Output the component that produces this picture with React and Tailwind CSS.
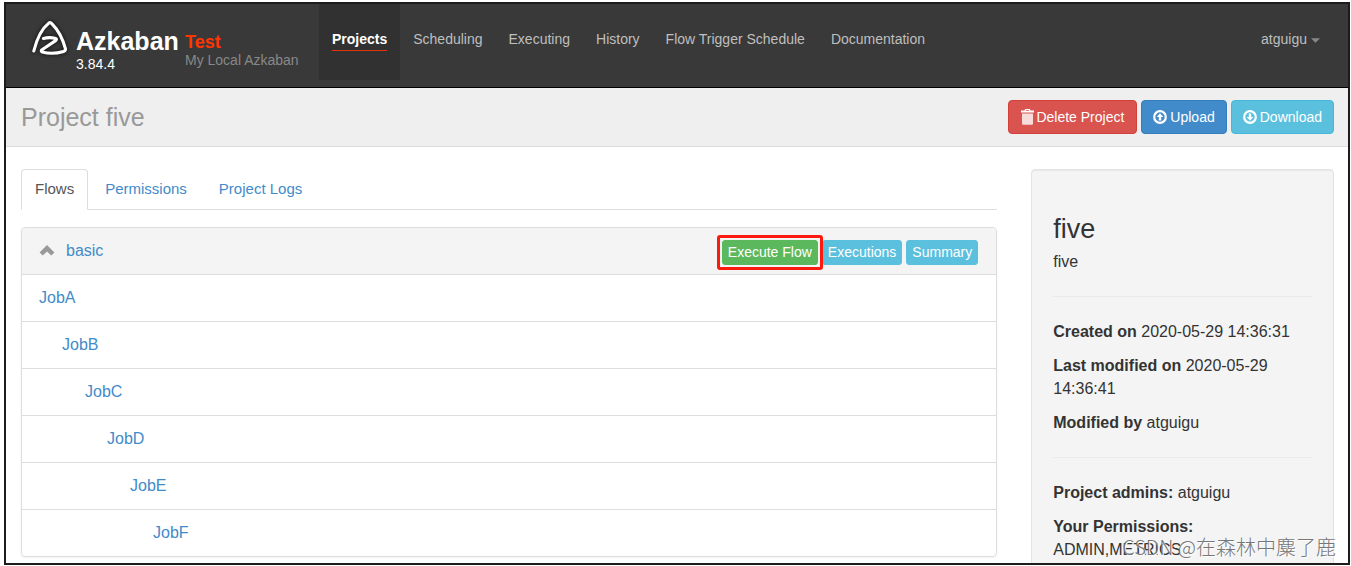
import React, { useState } from 'react';

const NAV_ITEMS = ['Projects', 'Scheduling', 'Executing', 'History', 'Flow Trigger Schedule', 'Documentation'];

const TABS = ['Flows', 'Permissions', 'Project Logs'];

const JOBS = [
    { name: 'JobA', indent: 'pl-[17px]' },
    { name: 'JobB', indent: 'pl-10' },
    { name: 'JobC', indent: 'pl-[63px]' },
    { name: 'JobD', indent: 'pl-[85px]' },
    { name: 'JobE', indent: 'pl-[108px]' },
    { name: 'JobF', indent: 'pl-[131px]' },
];

const Logo = () => (
    <svg
        className="w-9 h-9 drop-shadow-[0_0_2px_rgba(0,0,0,0.8)]"
        viewBox="0 0 36 36"
        fill="none"
        stroke="white"
        strokeWidth="3.1"
        strokeLinecap="round"
        strokeLinejoin="round"
        aria-hidden="true"
    >
        <path d="M1.8 31C4.4 20.5 9.8 8.6 16.8 3.1Q18.3 2 19.8 3.6C26.5 10.4 31 19.6 33.4 28.6Q33.8 30.8 31.6 31.4C25 33.4 16 33.6 10.4 32Q8.4 31 10 29.8L15.6 26L23.6 20.6Q25.6 18.8 23 18.2Q17 17 11.4 18.4" />
    </svg>
);

const TrashIcon = () => (
    <svg className="w-[13px] h-4" viewBox="0 0 13 16" fill="currentColor" aria-hidden="true">
        <path fillRule="evenodd" d="M4.2 0h4.6l.8 1.6H13v2H0v-2h3.4zM5 1l-.3.7h3.6L8 1z" />
        <path d="M1 4.4h11v10.1a1.2 1.2 0 0 1-1.2 1.2H2.2A1.2 1.2 0 0 1 1 14.5z" opacity=".8" />
    </svg>
);

const CircleArrowIcon = ({ down }) => (
    <svg className={down ? 'w-[14px] h-[14px] rotate-180' : 'w-[14px] h-[14px]'} viewBox="0 0 14 14" aria-hidden="true">
        <circle cx="7" cy="7" r="5.8" fill="none" stroke="currentColor" strokeWidth="2.2" />
        <path d="M7 3.2L10.3 7.1H8.2V10.4H5.8V7.1H3.7z" fill="currentColor" />
    </svg>
);

const ChevronUpIcon = () => (
    <svg className="w-4 h-4" viewBox="0 0 16 16" fill="#999999" aria-hidden="true">
        <path d="M8 2L15.4 9.4L12.3 12.6L8 8.4L3.7 12.6L.6 9.4z" />
    </svg>
);

const Header = () => (
    <header className="flex items-start justify-between h-[84px] shrink-0 bg-[#393939] border-b border-black pl-[26px] pr-[15px]">
        <div className="flex">
            <a href="#home" className="flex items-start gap-2 text-white w-[153px]">
                <span className="pt-4">
                    <Logo />
                </span>
                <span className="pt-[23px]">
                    <span className="block text-[25px] leading-7 font-bold">Azkaban</span>
                    <span className="block text-sm leading-[18px]">3.84.4</span>
                </span>
            </a>
            <div className="pt-7 w-[134px]">
                <div className="text-lg leading-5 font-bold text-[#ff3601]">Test</div>
                <div className="text-sm leading-4 text-[#888888]">My Local Azkaban</div>
            </div>

            <nav className="flex h-[76px] text-sm leading-[22px]">
                {NAV_ITEMS.map((item, index) => (
                    <a
                        key={item}
                        href="#nav"
                        className={
                            index === 0
                                ? 'px-[13px] pt-6 bg-[#313131] font-bold text-white'
                                : 'px-[13px] pt-6 text-[#bfbfbf]'
                        }
                    >
                        <span className={index === 0 ? 'block border-b border-[#e0340b]' : 'block'}>{item}</span>
                    </a>
                ))}
            </nav>
        </div>

        <button type="button" className="flex items-center gap-1 mt-6 px-[13px] text-sm leading-[22px] text-[#bfbfbf]">
            atguigu
            <svg className="w-[9px] h-[5px] mt-[3px]" viewBox="0 0 10 5" fill="#888888" aria-hidden="true">
                <path d="M0 0h10L5 5z" />
            </svg>
        </button>
    </header>
);

const ProjectBar = () => (
    <div className="flex items-center justify-between h-[59px] shrink-0 bg-[#efefef] border-b border-[#dddddd] pl-[15px] pr-[14px]">
        <h1 className="text-[25px] leading-8 text-[#999999]">Project five</h1>
        <div className="flex gap-1 text-sm text-white">
            <button type="button" className="flex items-center gap-[2px] h-[34px] px-3 rounded bg-[#d9534f] border border-[#d43f3a]">
                <TrashIcon />
                Delete Project
            </button>
            <button type="button" className="flex items-center gap-[3px] h-[34px] px-[11px] rounded bg-[#428bca] border border-[#357ebd]">
                <CircleArrowIcon />
                Upload
            </button>
            <button type="button" className="flex items-center gap-[3px] h-[34px] px-[11px] rounded bg-[#5bc0de] border border-[#46b8da]">
                <CircleArrowIcon down />
                Download
            </button>
        </div>
    </div>
);

const FlowPanel = () => (
    <div className="mt-[17px] border border-[#dddddd] rounded shadow-xs">
        <div className="flex items-center justify-between h-[47px] bg-[#f4f4f4] border-b border-[#dddddd] pl-[17px] pr-[18px] rounded-t">
            <div className="flex items-center gap-[11px]">
                <ChevronUpIcon />
                <a href="#basic" className="text-base text-[#428bca]">basic</a>
            </div>
            <div className="flex gap-1 mt-[2px] text-sm leading-[23px] text-white">
                <div className="relative flex">
                    <button type="button" className="px-[5px] rounded-[3px] bg-[#5cb85c] border border-[#5cb85c]">
                        Execute Flow
                    </button>
                    <span className="absolute -inset-x-[5px] -inset-y-[5px] z-10 border-[3px] border-[#fb1a0e] rounded-[3px] pointer-events-none" />
                </div>
                <button type="button" className="px-[5px] rounded-[3px] bg-[#5bc0de] border border-[#5bc0de]">
                    Executions
                </button>
                <button type="button" className="px-[5px] rounded-[3px] bg-[#5bc0de] border border-[#5bc0de]">
                    Summary
                </button>
            </div>
        </div>

        <ul className="divide-y divide-[#dddddd]">
            {JOBS.map((job) => (
                <li key={job.name} className={job.indent}>
                    <a href="#job" className="block text-base leading-[46px] text-[#428bca]">{job.name}</a>
                </li>
            ))}
        </ul>
    </div>
);

const Sidebar = () => (
    <aside className="h-[480px] bg-[#f4f4f4] border border-[#e3e3e3] rounded shadow-[inset_0_1px_1px_rgba(0,0,0,0.05)] px-[21px] pt-11 text-base leading-[23px] text-[#333333]">
        <h2 className="text-[27px] leading-[30px]">five</h2>
        <p className="mt-[6px]">five</p>
        <hr className="my-[23px] border-[#eaeaea]" />
        <div className="flex flex-col gap-[11px]">
            <p><strong>Created on</strong> 2020-05-29 14:36:31</p>
            <p><strong>Last modified on</strong> 2020-05-29 14:36:41</p>
            <p><strong>Modified by</strong> atguigu</p>
        </div>
        <hr className="my-[23px] border-[#eaeaea]" />
        <div className="flex flex-col gap-[11px]">
            <p><strong>Project admins:</strong> atguigu</p>
            <p><strong>Your Permissions:</strong> ADMIN,METRICS</p>
        </div>
    </aside>
);

const App = () => {
    const [activeTab, setActiveTab] = useState('Flows');

    return (
        <div className="h-screen bg-white pt-[2px] pl-1 pr-[1px] pb-[1px] font-['Liberation_Sans',Arial,sans-serif]">
            <div className="relative flex flex-col h-full overflow-hidden border-2 border-[#1c1c1c]">
                <Header />
                <ProjectBar />

                <main className="grid grid-cols-4 items-start gap-[34px] pt-[22px] pl-[15px] pr-[14px]">
                    <section className="col-span-3">
                        <div role="tablist" className="flex gap-[2px] border-b border-[#dddddd] text-[15px] leading-[22px]">
                            {TABS.map((tab) => (
                                <button
                                    key={tab}
                                    type="button"
                                    role="tab"
                                    aria-selected={activeTab === tab}
                                    onClick={() => setActiveTab(tab)}
                                    className={
                                        activeTab === tab
                                            ? '-mb-px px-[13px] pt-2 pb-[9px] rounded-t border border-[#dddddd] border-b-white bg-white text-[#555555]'
                                            : '-mb-px px-[14px] pt-2 pb-[9px] border border-transparent text-[#428bca]'
                                    }
                                >
                                    {tab}
                                </button>
                            ))}
                        </div>
                        <FlowPanel />
                    </section>

                    <Sidebar />
                </main>

                <div className="absolute right-3 bottom-[2px] text-xl leading-7 font-light text-[#777777] [text-shadow:1px_1px_0_white] font-['Noto_Sans_CJK_SC',sans-serif] whitespace-nowrap pointer-events-none">
                    CSDN @在森林中麋了鹿
                </div>
            </div>
        </div>
    );
};

export default App;
